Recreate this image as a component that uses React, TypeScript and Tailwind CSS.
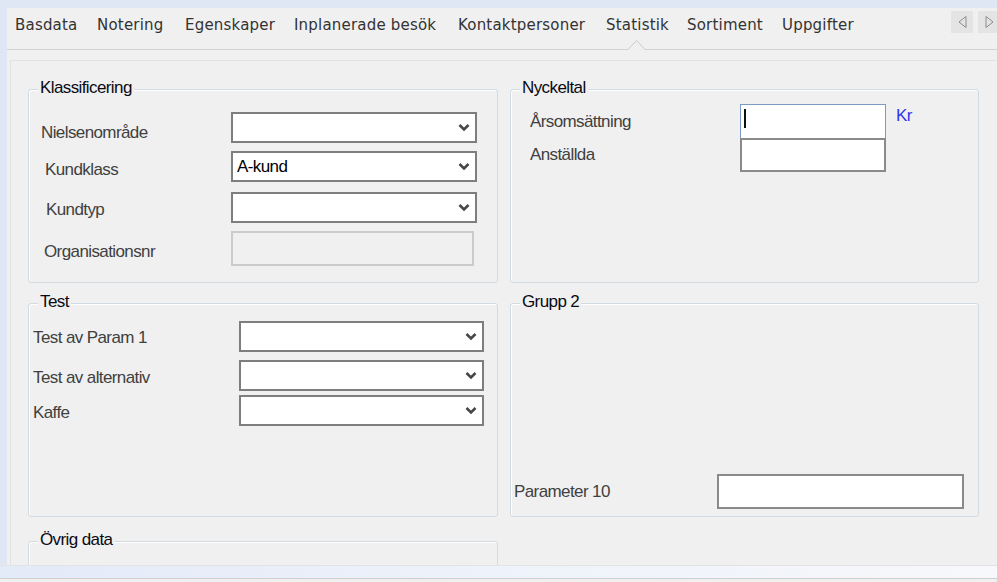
import type { ReactNode } from 'react';

const tabs = [
  { label: 'Basdata', w: 'w-[82px]' },
  { label: 'Notering', w: 'w-[88px]' },
  { label: 'Egenskaper', w: 'w-[109px]' },
  { label: 'Inplanerade besök', w: 'w-[164px]' },
  { label: 'Kontaktpersoner', w: 'w-[148px]' },
  { label: 'Statistik', w: 'w-[81px]' },
  { label: 'Sortiment', w: 'w-[95px]' },
  { label: 'Uppgifter', w: 'w-[95px]' },
];

function Chevron() {
  return (
    <svg width="12" height="9" viewBox="0 0 12 9">
      <polyline points="1.5,2 6,6.5 10.5,2" fill="none" stroke="#464646" strokeWidth="2.6" />
    </svg>
  );
}

// dropdown box, winforms style
function Combo({ value, w }: { value?: string; w: string }) {
  return (
    <div className={`${w} h-[31px] border-2 border-[#7e7e7e] bg-white flex items-center justify-between pl-[4px] pr-[5px]`}>
      <span className="text-black">{value}</span>
      <Chevron />
    </div>
  );
}

function Group({ title, className, children }: { title: string; className?: string; children?: ReactNode }) {
  return (
    <div className={`rounded-[3px] border border-[#d3dbe2] shadow-[inset_1px_1px_0_#ffffff] flex flex-col ${className ?? ''}`}>
      <div className="-mt-[11px] ml-[9px] w-fit bg-[#f0f0f0] px-[2px] leading-[18px] text-[#0a0a12]">{title}</div>
      {children}
    </div>
  );
}

export default function App() {
  return (
    <div className="w-[997px] h-[582px] overflow-hidden bg-[#dfe6f4] flex flex-col font-['Liberation_Sans',Arial,sans-serif] text-[17px] tracking-[-0.6px]">
      <div className="ml-[7px] mt-[8px] h-[557px] bg-[#f0f0f0] flex flex-col">
        {/* tab strip */}
        <div className="relative h-[42px] shrink-0 border-b border-[#d2d2d2] flex items-start pl-[8px] pt-[3px] font-['DejaVu_Sans',Verdana,sans-serif] text-[15px] tracking-[0.2px] text-[#333]">
          {tabs.map((t) => (
            <div key={t.label} className={`${t.w} shrink-0 mt-[5px] leading-[18px] whitespace-nowrap`}>
              {t.label}
            </div>
          ))}
          <div className="ml-auto -mr-[3px] flex gap-[5px]">
            <div className="w-[22px] h-[22px] bg-[#e4e4e4] flex items-center justify-center">
              <svg width="9" height="12" viewBox="0 0 9 12">
                <polygon points="8,0.5 8,11.5 1,6" fill="none" stroke="#8a8a8a" strokeWidth="1" />
              </svg>
            </div>
            <div className="w-[22px] h-[22px] bg-[#e4e4e4] flex items-center justify-center">
              <svg width="9" height="12" viewBox="0 0 9 12">
                <polygon points="1,0.5 1,11.5 8,6" fill="none" stroke="#8a8a8a" strokeWidth="1" />
              </svg>
            </div>
          </div>
          {/* notch under the selected tab */}
          <svg className="absolute left-[621px] top-[32px]" width="17" height="10" viewBox="0 0 17 10">
            <polygon points="0,10 8.5,0.5 17,10" fill="#f0f0f0" />
            <polyline points="0,9.5 8.5,0.5 17,9.5" fill="none" stroke="#c9c9c9" strokeWidth="1" />
          </svg>
        </div>

        {/* page content */}
        <div className="mt-[10px] ml-[3px] flex-1 border-l border-t border-[#e2e2e2] pt-[28px] pl-[17px] overflow-hidden flex flex-col text-[#404040]">
          <div className="grid grid-cols-[470px_469px] gap-x-[12px]">
            <Group title="Klassificering" className="h-[194px]">
              <div className="mt-[15px] flex items-start">
                <div className="w-[202px] pl-[12px] mt-[11px] leading-[20px]">Nielsenområde</div>
                <Combo w="w-[246px]" />
              </div>
              <div className="mt-[8px] flex items-start">
                <div className="w-[202px] pl-[16px] mt-[9px] leading-[20px]">Kundklass</div>
                <Combo w="w-[246px]" value="A-kund" />
              </div>
              <div className="mt-[10px] flex items-start">
                <div className="w-[202px] pl-[17px] mt-[8px] leading-[20px]">Kundtyp</div>
                <Combo w="w-[246px]" />
              </div>
              <div className="mt-[8px] flex items-start">
                <div className="w-[202px] pl-[15px] mt-[11px] leading-[20px]">Organisationsnr</div>
                <div className="w-[243px] h-[35px] border-2 border-[#cbcbcb] bg-[#f0f0f0]" />
              </div>
            </Group>

            <Group title="Nyckeltal" className="h-[194px]">
              <div className="mt-[7px] flex items-start">
                <div className="w-[229px] pl-[19px] mt-[8px] leading-[20px]">Årsomsättning</div>
                <div className="w-[146px] h-[34px] border border-b-0 border-[#7a9cc4] bg-white flex items-start">
                  <div className="ml-[3px] mt-[4px] w-[1.5px] h-[19px] bg-[#111]" />
                </div>
                <div className="ml-[10px] mt-[2px] leading-[20px] text-[#3434f0]">Kr</div>
              </div>
              <div className="flex items-start">
                <div className="w-[229px] pl-[19px] mt-[7px] leading-[20px]">Anställda</div>
                <div className="w-[146px] h-[34px] border-2 border-[#8a8a8a] bg-white" />
              </div>
            </Group>
          </div>

          <div className="mt-[20px] grid grid-cols-[470px_469px] gap-x-[12px]">
            <Group title="Test" className="h-[214px]">
              <div className="mt-[10px] flex items-center">
                <div className="w-[210px] pl-[4px] pt-[3px] leading-[20px]">Test av Param 1</div>
                <Combo w="w-[245px]" />
              </div>
              <div className="mt-[8px] flex items-center">
                <div className="w-[210px] pl-[4px] pt-[4px] leading-[20px]">Test av alternativ</div>
                <Combo w="w-[245px]" />
              </div>
              <div className="mt-[4px] flex items-center">
                <div className="w-[210px] pl-[4px] pt-[4px] leading-[20px]">Kaffe</div>
                <Combo w="w-[245px]" />
              </div>
            </Group>

            <Group title="Grupp 2" className="h-[214px]">
              <div className="mt-auto mb-[7px] flex items-center">
                <div className="w-[206px] pl-[3px] leading-[20px]">Parameter 10</div>
                <div className="w-[247px] h-[35px] border-2 border-[#8a8a8a] bg-white" />
              </div>
            </Group>
          </div>

          <div className="mt-[24px] grid grid-cols-[470px_469px] gap-x-[12px]">
            <Group title="Övrig data" className="h-[80px]" />
          </div>
        </div>
      </div>

      {/* bottom frame */}
      <div className="h-[13px] shrink-0 border-t border-[#e3e3e3] bg-gradient-to-r from-[#e3eaf8] via-[#eef2fa] to-[#f7f8fb]" />
      <div className="h-[4px] shrink-0 border-t border-[#cfcfcf] bg-[#f0f0f0]" />
    </div>
  );
}
